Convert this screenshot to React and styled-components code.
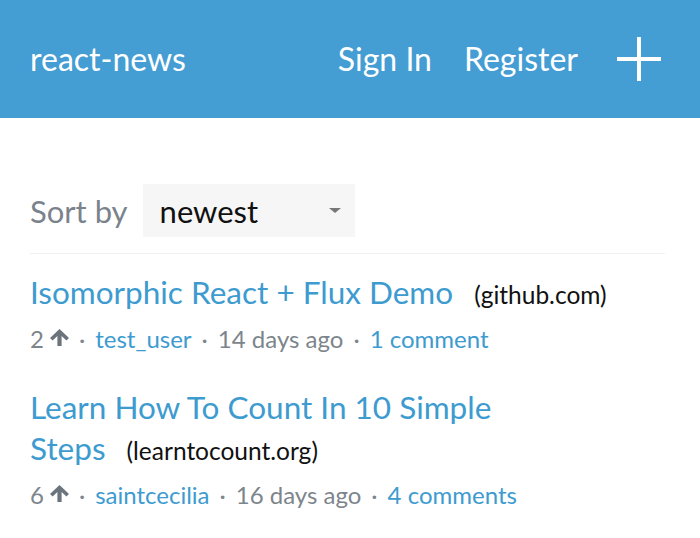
import React from "react";
import styled, { createGlobalStyle } from "styled-components";

const Global = createGlobalStyle`
  html, body { margin: 0; padding: 0; background: #fff; }
  body { font-family: Lato, "Open Sans", sans-serif; }
  * { box-sizing: border-box; }
`;

const Header = styled.header`
  height: 118px;
  background: #449dd3;
  display: flex;
  align-items: center;
  padding: 0 38px 0 30px;
  color: #fff;
`;

const Brand = styled.a`
  font-size: 32px;
  color: #fff;
  text-decoration: none;
  flex: 1;
  margin-top: -2px;
`;

const Nav = styled.nav`
  display: flex;
  align-items: center;
  gap: 32px;
`;

const NavLink = styled.a`
  font-size: 32px;
  color: #fff;
  text-decoration: none;
  margin-top: -2px;
`;

const PlusButton = styled.span`
  display: flex;
  width: 46px;
  height: 46px;
  margin-left: 6px;
`;

const Main = styled.main`
  padding: 66px 35px 0 30px;
`;

const SortRow = styled.div`
  display: flex;
  align-items: center;
  gap: 15px;
  padding-bottom: 16px;
  border-bottom: 1px solid #f0f0f0;
`;

const SortLabel = styled.span`
  font-size: 31px;
  color: #7a838c;
`;

const Select = styled.div`
  width: 212px;
  height: 53px;
  background: #f6f6f6;
  display: flex;
  align-items: center;
  justify-content: space-between;
  padding: 0 14px 0 17px;
  font-size: 31px;
  color: #111;
`;

const Caret = styled.span`
  width: 0;
  height: 0;
  border-left: 6px solid transparent;
  border-right: 6px solid transparent;
  border-top: 5px solid #777;
`;

const List = styled.ul`
  list-style: none;
  margin: 0;
  padding: 18px 0 0;
`;

const Item = styled.li`
  margin-bottom: 33px;
`;

const TitleLine = styled.div`
  font-size: 31.5px;
  line-height: 41px;
`;

const Title = styled.a`
  color: #3d9bd0;
  text-decoration: none;
`;

const Domain = styled.span`
  font-size: 24.5px;
  color: #111;
  white-space: nowrap;
  margin-left: 21px;
`;

const Meta = styled.div`
  display: flex;
  align-items: center;
  font-size: 24px;
  color: #7d858c;
  margin-top: 9px;
  line-height: 30px;
`;

const Sep = styled.span`
  margin: 0 10px;
`;

const MetaLink = styled.a`
  color: #3d9bd0;
  text-decoration: none;
`;

const ArrowIcon = styled.svg`
  margin-left: 6px;
  margin-top: -4px;
  flex: none;
`;

const Arrow = () => (
  <ArrowIcon width="19" height="17" viewBox="0 0 19 17">
    <path d="M9.5 0 L19 9 L16.4 11.6 L11.6 7 L11.6 17 L7.4 17 L7.4 7 L2.6 11.6 L0 9 Z" fill="#6b747c" />
  </ArrowIcon>
);

const posts = [
  { title: "Isomorphic React + Flux Demo", domain: "github.com", score: 2, user: "test_user", ago: "14 days ago", comments: "1 comment" },
  { title: "Learn How To Count In 10 Simple Steps", domain: "learntocount.org", score: 6, user: "saintcecilia", ago: "16 days ago", comments: "4 comments" },
];

export default function App() {
  return (
    <>
      <Global />
      <Header>
        <Brand href="#">react-news</Brand>
        <Nav>
          <NavLink href="#">Sign In</NavLink>
          <NavLink href="#">Register</NavLink>
          <PlusButton>
            <svg width="46" height="46" viewBox="0 0 46 46">
              <path d="M23 1 V45 M1 23 H45" stroke="#fff" strokeWidth="4" />
            </svg>
          </PlusButton>
        </Nav>
      </Header>
      <Main>
        <SortRow>
          <SortLabel>Sort by</SortLabel>
          <Select>
            newest
            <Caret />
          </Select>
        </SortRow>
        <List>
          {posts.map((p) => (
            <Item key={p.title}>
              <TitleLine>
                <Title href="#">{p.title}</Title><Domain>({p.domain})</Domain>
              </TitleLine>
              <Meta>
                {p.score}
                <Arrow />
                <Sep>·</Sep>
                <MetaLink href="#">{p.user}</MetaLink>
                <Sep>·</Sep>
                {p.ago}
                <Sep>·</Sep>
                <MetaLink href="#">{p.comments}</MetaLink>
              </Meta>
            </Item>
          ))}
        </List>
      </Main>
    </>
  );
}
